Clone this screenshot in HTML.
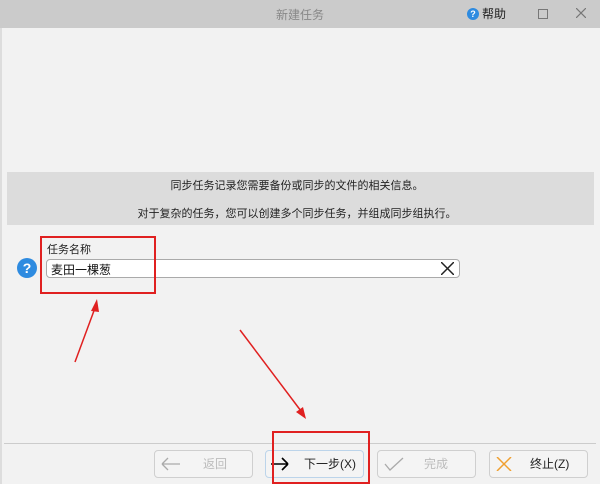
<!DOCTYPE html>
<html><head><meta charset="utf-8"><style>
body{margin:0;width:600px;height:484px;overflow:hidden;background:#f2f2f2;font-family:"Liberation Sans","Noto Sans CJK SC",sans-serif;position:relative}
.a{position:absolute}
.btn{position:absolute;top:450px;height:28px;border:1px solid #cfcfcf;border-radius:4px;background:#f4f4f4;box-sizing:border-box;font-size:12px;color:#bbb;line-height:26px}
.btn svg{position:absolute;left:6px;top:6px}
</style></head><body>
<div class="a" style="left:0;top:0;width:600px;height:28px;background:#cbcbcb"></div>
<div class="a" style="left:0;top:6px;width:600px;text-align:center;font-size:12px;color:#888">新建任务</div>
<div class="a" style="left:467px;top:8px;width:12px;height:12px;border-radius:50%;background:#2e8be0;color:#fff;font-size:9px;font-weight:bold;text-align:center;line-height:12px">?</div>
<div class="a" style="left:482px;top:5px;font-size:12px;color:#222">帮助</div>
<div class="a" style="left:538px;top:9px;width:8px;height:8px;border:1px solid #777"></div>
<svg class="a" style="left:576px;top:8px" width="10" height="10"><path d="M0 0L10 10M10 0L0 10" stroke="#777" stroke-width="1.2"/></svg>
<div class="a" style="left:0;top:28px;width:2px;height:456px;background:#ddd"></div>
<div class="a" style="left:7px;top:172px;width:587px;height:53px;background:#dcdcdc"></div>
<div class="a" style="left:0;top:177px;width:594px;text-align:center;font-size:11px;color:#222">同步任务记录您需要备份或同步的文件的相关信息。</div>
<div class="a" style="left:0;top:205px;width:594px;text-align:center;font-size:11px;color:#222">对于复杂的任务，您可以创建多个同步任务，并组成同步组执行。</div>
<div class="a" style="left:47px;top:241px;font-size:11px;color:#222">任务名称</div>
<div class="a" style="left:17px;top:258px;width:20px;height:20px;border-radius:50%;background:#2e8be0;color:#fff;font-size:14px;font-weight:bold;text-align:center;line-height:20px">?</div>
<div class="a" style="left:46px;top:259px;width:414px;height:19px;border:1px solid #aaa;border-radius:4px;background:#fff;box-sizing:border-box"></div>
<div class="a" style="left:51px;top:261px;font-size:12px;color:#111">麦田一棵葱</div>
<svg class="a" style="left:441px;top:262px" width="13" height="13"><path d="M0 0L13 13M13 0L0 13" stroke="#222" stroke-width="1.5"/></svg>
<div class="a" style="left:40px;top:236px;width:116px;height:58px;border:2px solid #e02020;box-sizing:border-box"></div>
<div class="a" style="left:4px;top:443px;width:592px;height:1px;background:#ccc"></div>
<div class="btn" style="left:154px;width:99px"><svg width="20" height="14"><path d="M1 7H19M1 7L7 1M1 7L7 13" stroke="#aaa" stroke-width="1.3" fill="none"/></svg><span style="position:absolute;left:48px">返回</span></div>
<div class="btn" style="left:265px;width:99px;border-color:#bcd4ea;color:#222"><svg width="20" height="14" style="left:4px"><path d="M1 7H18M18 7L12 1M18 7L12 13" stroke="#000" stroke-width="1.6" fill="none"/></svg><span style="position:absolute;left:38px">下一步(X)</span></div>
<div class="btn" style="left:377px;width:99px"><svg width="20" height="14"><path d="M1 7L6 13L19 1" stroke="#aaa" stroke-width="1.3" fill="none"/></svg><span style="position:absolute;left:46px">完成</span></div>
<div class="btn" style="left:489px;width:99px;color:#222"><svg width="16" height="14"><path d="M1 0L15 14M15 0L1 14" stroke="#f0a030" stroke-width="1.5"/></svg><span style="position:absolute;left:40px">终止(Z)</span></div>
<div class="a" style="left:272px;top:431px;width:98px;height:53px;border:2px solid #e02020;box-sizing:border-box"></div>
<svg class="a" style="left:0;top:0" width="600" height="484"><g stroke="#e02020" stroke-width="1.5" fill="#e02020">
<line x1="75" y1="362" x2="95" y2="308"/><polygon points="97,299 91,311 99,312" stroke="none"/>
<line x1="240" y1="330" x2="301" y2="411"/><polygon points="306,419 296,412 303,407" stroke="none"/></g></svg>
</body></html>
